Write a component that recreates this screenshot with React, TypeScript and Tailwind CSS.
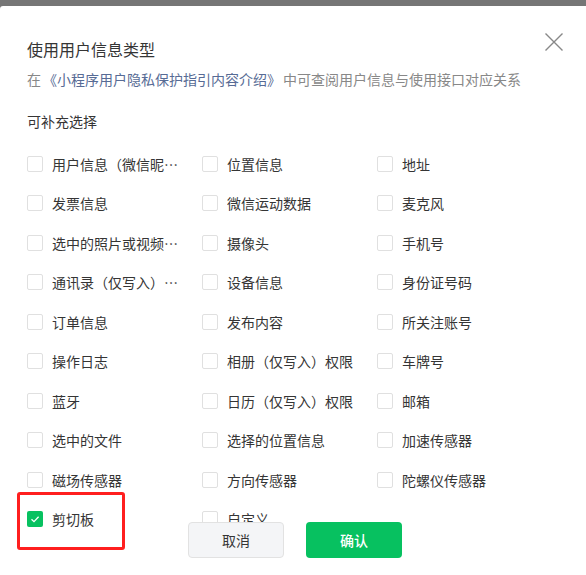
const rows: string[][] = [
  ["用户信息（微信昵称、头像）", "位置信息", "地址"],
  ["发票信息", "微信运动数据", "麦克风"],
  ["选中的照片或视频信息", "摄像头", "手机号"],
  ["通讯录（仅写入）权限", "设备信息", "身份证号码"],
  ["订单信息", "发布内容", "所关注账号"],
  ["操作日志", "相册（仅写入）权限", "车牌号"],
  ["蓝牙", "日历（仅写入）权限", "邮箱"],
  ["选中的文件", "选择的位置信息", "加速传感器"],
  ["磁场传感器", "方向传感器", "陀螺仪传感器"],
  ["剪切板", "自定义"],
];

const checked = new Set(["剪切板"]);

function CheckItem({ label }: { label: string }) {
  const on = checked.has(label);
  return (
    <div className="flex items-center gap-[9px] h-6">
      {on ? (
        <span className="w-4 h-4 shrink-0 rounded-[2px] bg-[#07c160] flex items-center justify-center">
          <svg viewBox="0 0 16 16" className="w-4 h-4">
            <path d="M4.5 8.2 L7 10.6 L11.6 5.8" fill="none" stroke="#fff" strokeWidth="1.3" />
          </svg>
        </span>
      ) : (
        <span className="w-4 h-4 shrink-0 rounded-[2px] border border-[#e0e0e0] bg-white" />
      )}
      <span className="max-w-[127px] truncate text-[14px] leading-6 text-[#353535]">{label}</span>
    </div>
  );
}

export default function App() {
  return (
    <div
      className="w-[586px] h-[575px] bg-[#767676] pt-[6px] overflow-hidden"
      style={{ fontFamily: '"Noto Sans CJK SC", "Noto Sans", sans-serif' }}
    >
      <div className="relative h-[569px] bg-white rounded-tl-[3px] overflow-hidden pl-[27px] pt-[31px]">
        <button className="absolute left-[545px] top-[27px]">
          <svg viewBox="0 0 18 18" className="w-[18px] h-[18px]">
            <path d="M0.5 0.5 L17.5 17.5 M17.5 0.5 L0.5 17.5" stroke="#888" strokeWidth="1.4" fill="none" />
          </svg>
        </button>

        <h1 className="text-[16px] leading-6 text-[#353535]">使用用户信息类型</h1>
        <p className="mt-2 text-[14px] leading-5 text-[#888]">
          在<span className="mx-[2px] text-[#576b95]">《小程序用户隐私保护指引内容介绍》</span>中可查阅用户信息与使用接口对应关系
        </p>
        <p className="mt-[22px] text-[14px] leading-5 text-[#353535]">可补充选择</p>

        {/* options */}
        <div className="mt-[21px] grid grid-cols-[175px_175px_175px] auto-rows-[39.44px]">
          {rows.flat().map((label) => (
            <CheckItem key={label} label={label} />
          ))}
        </div>

        {/* highlight annotation */}
        <div className="absolute left-[17px] top-[486px] w-[108px] h-[58px] border-[3px] border-[#ff1f1f] rounded-[3px]" />

        {/* footer buttons */}
        <div className="absolute left-[188px] top-[516px] flex gap-[22px]">
          <button className="w-24 h-9 rounded-[4px] border border-[#e2e2e2] bg-[#f4f5f7] text-[14px] text-[#353535]">
            取消
          </button>
          <button className="w-24 h-9 rounded-[4px] bg-[#07c160] text-[14px] font-medium text-white">
            确认
          </button>
        </div>
      </div>
    </div>
  );
}
